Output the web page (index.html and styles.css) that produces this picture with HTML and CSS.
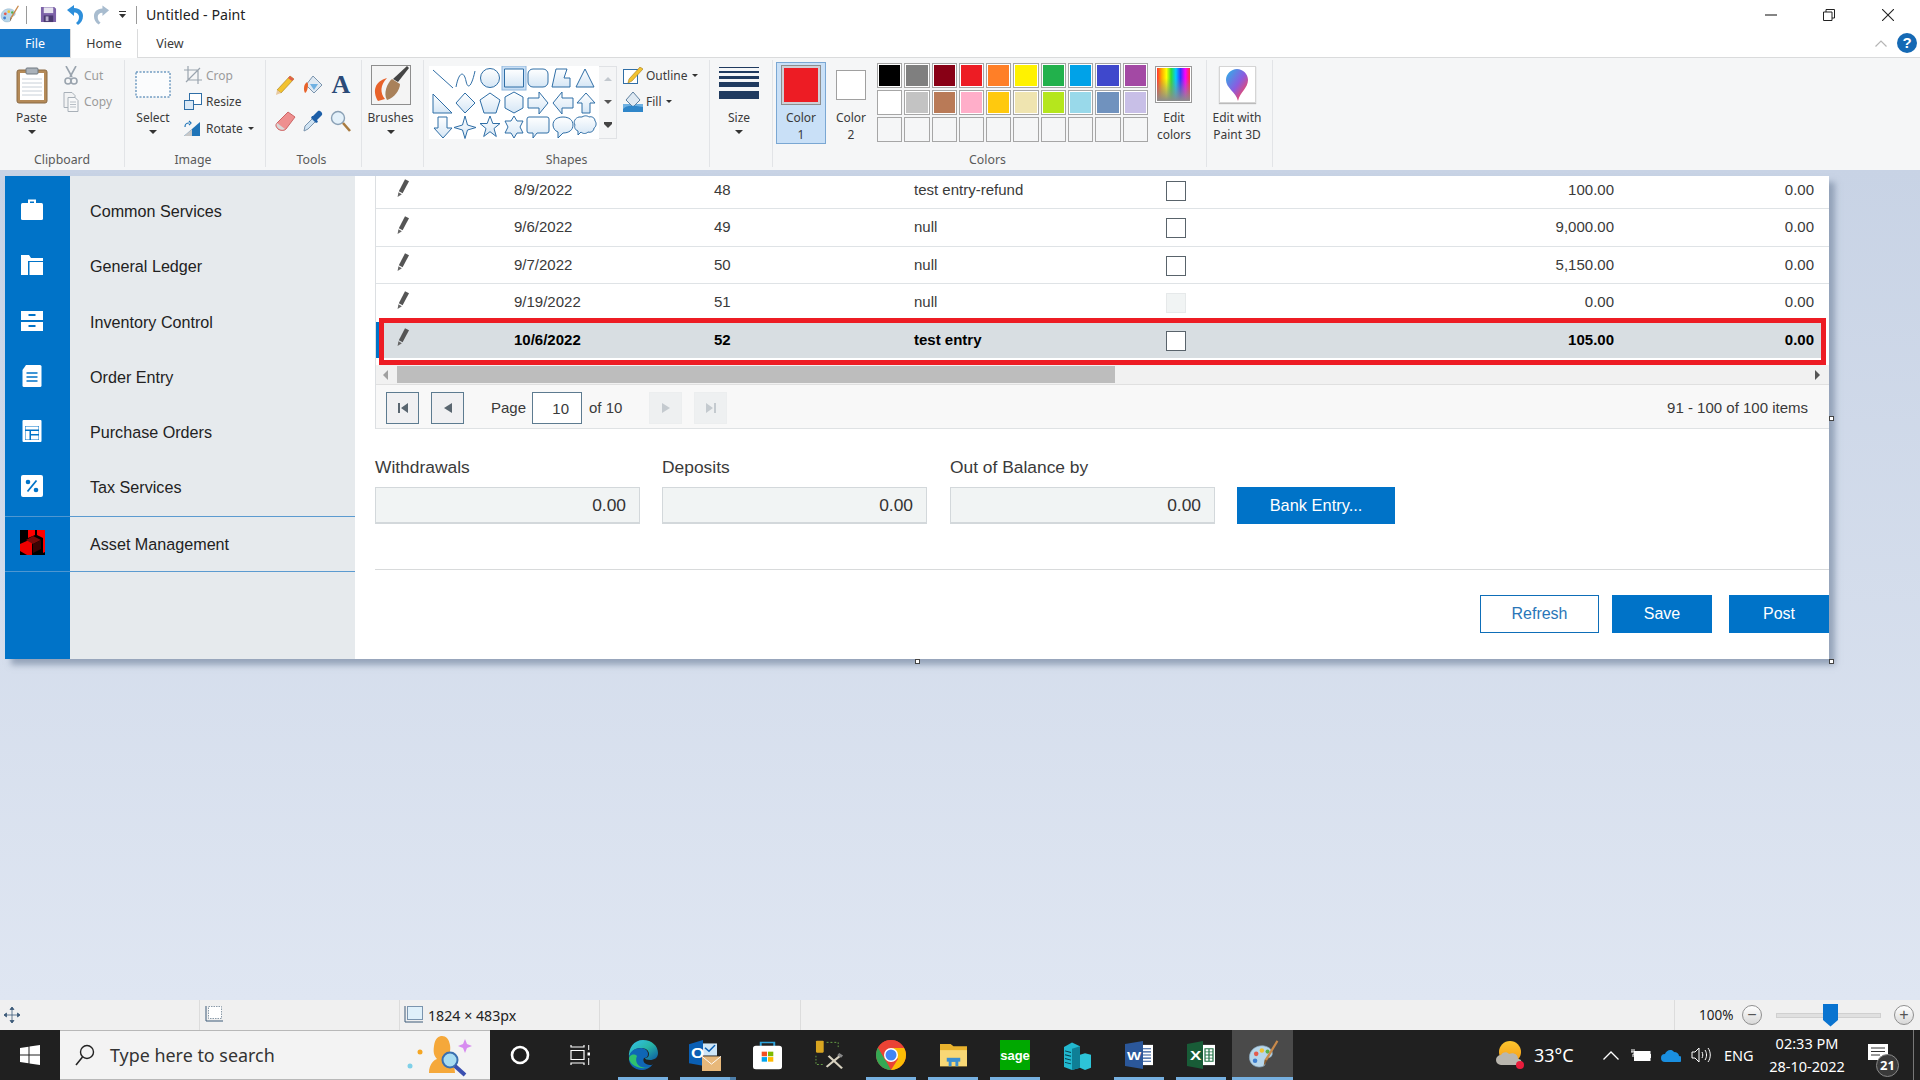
FILE: index.html
```html
<!DOCTYPE html>
<html lang="en">
<head>
<meta charset="utf-8">
<title>Untitled - Paint</title>
<link rel="stylesheet" href="styles.css">
</head>
<body>
<svg class="defs" aria-hidden="true">
  <defs>
    <linearGradient id="sh" x1="0" y1="0" x2="0" y2="1"><stop offset="0" stop-color="#fff"/><stop offset="1" stop-color="#d5e6f5"/></linearGradient>
    <linearGradient id="edge" x1="0" y1="0" x2="1" y2="1"><stop offset="0" stop-color="#35c1f1"/><stop offset=".5" stop-color="#27b5a5"/><stop offset="1" stop-color="#0c59a4"/></linearGradient>
    <linearGradient id="drop" x1="0" y1="0" x2="1" y2="1"><stop offset="0" stop-color="#27b6e8"/><stop offset=".5" stop-color="#8a5ce0"/><stop offset=".8" stop-color="#e8486e"/><stop offset="1" stop-color="#f6a623"/></linearGradient>
    <linearGradient id="sun" x1="0" y1="0" x2="0" y2="1"><stop offset="0" stop-color="#fdc62e"/><stop offset="1" stop-color="#f59a16"/></linearGradient>
    <symbol id="pal" viewBox="0 0 30 30">
      <path d="M3 17C3 10 10 6 16 7c5 1 8 4 7 8-1 3-5 2-6 4-1 3 1 5-2 6-5 2-12-1-12-8z" fill="#b7d6ea" stroke="#8aa9bf" stroke-width=".6"/>
      <circle cx="9" cy="14" r="2" fill="#e25b4d"/><circle cx="14" cy="11" r="2" fill="#f2c230"/><circle cx="19" cy="12" r="1.8" fill="#58b04a"/><circle cx="8" cy="20" r="2" fill="#3f7fd0"/>
      <path d="M27 2l1.500 1-10 17-2-1z" fill="#c98a4b"/><path d="M16.500 19l2 1-3 5z" fill="#8c5a2b"/>
    </symbol>
    <symbol id="pen" viewBox="0 0 12 18"><path d="M8 .3L12 2.300 5.600 14.300 1.800 12.200z" fill="#555"/><path d="M1.400 13.200L4.900 15.200 .6 18z" fill="#666"/></symbol>
  </defs>
</svg>

<header class="titlebar">
  <svg class="t-app" viewBox="0 0 30 30"><use href="#pal"/></svg>
  <i class="t-sep t-sep-a"></i>
  <svg class="t-save" viewBox="0 0 18 18"><path d="M1 1h14l2 2v14H1z" fill="#7c62a8"/><rect x="4" y="1.500" width="10" height="6" fill="#e6e3ee"/><rect x="4" y="10" width="10" height="7" fill="#4a3a70"/><rect x="6" y="11" width="3" height="5" fill="#b9b0cf"/></svg>
  <svg class="t-undo" viewBox="0 0 18 22"><path d="M1 6l7-5v3c6 0 9 4 9 8 0 4-2 7-5 9l-2-2c2-1.500 3-3.500 3-6 0-2.500-2-4.500-5-4.500V12z" fill="#2d8fdb"/></svg>
  <svg class="t-redo" viewBox="0 0 18 22"><path d="M17 6l-7-5v3C4 4 1 8 1 12c0 4 2 7 5 9l2-2c-2-1.500-3-3.500-3-6 0-2.500 2-4.500 5-4.500V12z" fill="#a8bccf"/></svg>
  <svg class="t-more" viewBox="0 0 8 8"><rect y="0" width="7" height="1" fill="#333"/><path d="M0 3h7L3.500 7z" fill="#333"/></svg>
  <i class="t-sep t-sep-b"></i>
  <span class="t-title">Untitled - Paint</span>
  <svg class="w-min" viewBox="0 0 12 12"><path d="M0 6h12" stroke="#222" stroke-width="1.100"/></svg>
  <svg class="w-max" viewBox="0 0 12 12"><path d="M.5 3h8.500v8.500H.5zM3 3V.5h8.500V9H9" fill="none" stroke="#222"/></svg>
  <svg class="w-close" viewBox="0 0 12 12"><path d="M0 0l12 12M12 0L0 12" stroke="#222" stroke-width="1.100"/></svg>
</header>

<nav class="tabs">
  <span class="tab tab-file">File</span>
  <span class="tab tab-home">Home</span>
  <span class="tab tab-view">View</span>
  <svg class="tab-chev" viewBox="0 0 12 7"><path d="M.5 6.500L6 1l5.500 5.500" fill="none" stroke="#b5b5b5" stroke-width="1.200"/></svg>
  <span class="tab-help">?</span>
</nav>

<section class="ribbon">
  <div class="grp g-clip">
    <div class="grp-body">
      <div class="big b-paste">
        <div class="big-icon"><svg width="32" height="37" viewBox="0 0 32 37"><rect x="1" y="3" width="30" height="33" rx="2" fill="#b48a58" stroke="#8a6a44"/><rect x="4" y="6" width="24" height="27" fill="#fff"/><path d="M6 12h20M6 16h20M6 20h20M6 24h20M6 28h20" stroke="#c8d0d8"/><rect x="10" y="1" width="12" height="6" rx="1" fill="#aab2ba" stroke="#6f7880"/></svg></div>
        <span class="big-label">Paste</span><span class="caret"></span>
      </div>
      <div class="smalls s-clip">
        <div class="small off"><svg width="14" height="19" viewBox="0 0 14 19"><path d="M2 0l6 11M12 0L6 11" stroke="#9aa4ae" stroke-width="1.600"/><circle cx="4" cy="15" r="3" fill="none" stroke="#9aa4ae" stroke-width="1.600"/><circle cx="10" cy="15" r="3" fill="none" stroke="#9aa4ae" stroke-width="1.600"/></svg><span>Cut</span></div>
        <div class="small off"><svg width="16" height="20" viewBox="0 0 16 20"><path d="M1 .5h8l3 3v12H1z" fill="#f2f3f4" stroke="#a8b0b8"/><path d="M5 5.500h7l3 3v11H5z" fill="#f7f8f9" stroke="#a8b0b8"/><path d="M7 10h6M7 12.500h6M7 15h6" stroke="#b8bfc6"/></svg><span>Copy</span></div>
      </div>
    </div>
    <div class="grp-label">Clipboard</div>
  </div>

  <div class="grp g-image">
    <div class="grp-body">
      <div class="big b-select">
        <div class="big-icon"><svg width="36" height="27" viewBox="0 0 36 27"><rect x="1" y="1" width="34" height="25" fill="#fbfcfd" stroke="#2f6ea6" stroke-dasharray="2 1.500"/></svg></div>
        <span class="big-label">Select</span><span class="caret"></span>
      </div>
      <div class="smalls s-image">
        <div class="small off"><svg width="18" height="18" viewBox="0 0 18 18"><path d="M4 0v14h14M0 4h14v14M2 16L16 2" fill="none" stroke="#9aa4ae" stroke-width="1.200"/></svg><span>Crop</span></div>
        <div class="small"><svg width="18" height="17" viewBox="0 0 18 17"><rect x="5.500" y=".5" width="12" height="11" fill="#fff" stroke="#2f6ea6"/><rect x=".5" y="7.500" width="9" height="9" fill="#dbe9f6" stroke="#2f6ea6"/></svg><span>Resize</span></div>
        <div class="small"><svg width="18" height="18" viewBox="0 0 18 18"><path d="M16 3v14H0z" fill="#1f74b8"/><path d="M8 10L0 17h8z" fill="#c8c8c8"/><path d="M1 8c0-3 1-4 4-4M5 2l2 2-2 2" fill="none" stroke="#1f74b8" stroke-width="1.200"/></svg><span>Rotate</span><span class="caret-in"></span></div>
      </div>
    </div>
    <div class="grp-label lbl-left">Image</div>
  </div>

  <div class="grp g-tools">
    <div class="grp-body tools-grid">
      <svg viewBox="0 0 22 22" class="tool"><path d="M16 2l4 3L7 19l-4-3z" fill="#f2c230" stroke="#a47c1c" stroke-width=".6"/><path d="M3 16l4 3-5 2z" fill="#e8c9a0"/><path d="M16 2l4 3-2 2-4-3z" fill="#e0604c"/></svg>
      <svg viewBox="0 0 22 22" class="tool"><path d="M11 2l9 9-8 8-8-8z" fill="#dfe9f2" stroke="#7a94ae"/><path d="M5 8C2 10 1 15 3 19c2-1 3-5 3-9z" fill="#e8622a"/><path d="M8 10h8l-4 6z" fill="#6fb1e2"/></svg>
      <span class="tool-a">A</span>
      <svg viewBox="0 0 22 22" class="tool"><path d="M14 2l7 5-9 12c-2 2-5 2-8 0-2-2-3-4-1-6z" fill="#ee8f8f" stroke="#c66"/><path d="M3 13l8 6c-2 1-5 1-7-1-1-1-2-3-1-5z" fill="#d8d8d8"/></svg>
      <svg viewBox="0 0 22 22" class="tool"><path d="M2 21l1-5 8-8 3 3-8 8z" fill="#cfe3f3" stroke="#7a94ae"/><path d="M11 6l5-5c2-1 5 2 4 4l-5 5 1 2-2 1-5-5 1-2z" fill="#1d5fa8"/></svg>
      <svg viewBox="0 0 22 22" class="tool"><circle cx="8" cy="8" r="6.500" fill="#e4f1fa" stroke="#8aa0b5" stroke-width="1.400"/><path d="M13 13l7 8" stroke="#a87a3f" stroke-width="2.600"/></svg>
    </div>
    <div class="grp-label lbl-left">Tools</div>
  </div>

  <div class="grp g-brush">
    <div class="grp-body">
      <div class="big b-brush">
        <div class="big-icon"><svg width="40" height="40" viewBox="0 0 40 40"><rect x=".5" y=".5" width="39" height="39" fill="#f4f4f4" stroke="#8e8e8e"/><path d="M7 36C1 26 4 16 16 13 9 20 9 28 14 34z" fill="#e8622a"/><path d="M38 3L27 17l-5-3L36 1z" fill="#444"/><path d="M21 14l8 5c0 6-6 14-13 16-4-6 0-17 5-21z" fill="#a9815a"/></svg></div>
        <span class="big-label">Brushes</span><span class="caret"></span>
      </div>
    </div>
    <div class="grp-label">&nbsp;</div>
  </div>

  <div class="grp g-shapes">
    <div class="grp-body shapes-body">
      <svg class="gallery" width="170" height="73" viewBox="0 0 170 73">
        <rect width="170" height="73" fill="#fff"/>
        <rect x="73" y="0" width="24" height="24" fill="#c9dff5" stroke="#8fb6dc"/>
        <g fill="url(#sh)" stroke="#2f6ea6" stroke-width="1" stroke-linejoin="round">
          <path d="M4 4L24 22" fill="none"/>
          <path d="M27 21c3-16 8-16 10-6s6 4 9-10" fill="none"/>
          <ellipse cx="61" cy="12" rx="9.500" ry="9.500"/>
          <rect x="75.500" y="3" width="19" height="18"/>
          <rect x="99" y="3" width="20" height="18" rx="5"/>
          <path d="M127 3h11l-3 9h6v9h-18z"/>
          <path d="M156 3l9 18h-18z"/>
          <path d="M4 28v19h19z"/>
          <path d="M36 27l10 10-10 10-9-10z"/>
          <path d="M61 27l10 7-4 13H55l-4-13z"/>
          <path d="M85 26l9 5v11l-9 5-9-5V31z"/>
          <path d="M99 32h11v-6l9 11-9 11v-6H99z"/>
          <path d="M144 32h-11v-6l-9 11 9 11v-6h11z"/>
          <path d="M157 27l9 10h-5v10h-8V37h-5z"/>
          <path d="M9 51h9v11h5l-9 10-9-10h4z"/>
          <path d="M36 50l2.500 9 8.500 2.500-8.500 2.500-2.500 8.500-2.500-8.500-8.500-2.500 8.500-2.500z"/>
          <path d="M61 50l2.800 7.500H71l-6 5 2.300 8-6.300-4.800-6.300 4.800 2.300-8-6-5h7.200z"/>
          <path d="M85 50l3 5h6l-3 6 3 6h-6l-3 5-3-5h-6l3-6-3-6h6z"/>
          <path d="M100 51h18a2 2 0 0 1 2 2v12a2 2 0 0 1-2 2h-10l-4 5v-5h-4a2 2 0 0 1-2-2V53a2 2 0 0 1 2-2z"/>
          <path d="M134 51c6 0 10 3 10 8s-4 8-10 8l-5 5v-6c-3-1-5-4-5-7 0-5 4-8 10-8z"/>
          <path d="M153 51c3-2 6-1 7 0 3-1 6 1 6 4 2 2 1 6-1 7 0 3-3 5-6 4-2 2-5 2-7 0l-3 3v-4c-3-1-4-4-3-6-2-3 0-7 4-8z"/>
        </g>
      </svg>
      <div class="gal-scroll"><span class="gs-up"></span><span class="gs-down"></span><span class="gs-more"></span></div>
      <div class="smalls s-shapes">
        <div class="small"><svg width="20" height="17" viewBox="0 0 20 17"><rect x=".5" y="2.500" width="14" height="14" fill="#fff" stroke="#2f6ea6"/><path d="M17 0l3 2-11 12-4 2 1-4z" fill="#f2c230" stroke="#a47c1c" stroke-width=".6"/></svg><span>Outline</span><span class="caret-in"></span></div>
        <div class="small"><svg width="20" height="21" viewBox="0 0 20 21"><path d="M0 13h20v8H0z" fill="#6fb1e2"/><path d="M10 1l7 8-7 7-7-7z" fill="#dfe9f2" stroke="#5d7f9f"/><path d="M0 18c4-4 8-4 20-2v5H0z" fill="#2f86c9"/></svg><span>Fill</span><span class="caret-in"></span></div>
      </div>
    </div>
    <div class="grp-label">Shapes</div>
  </div>

  <div class="grp g-size">
    <div class="grp-body">
      <div class="big b-size">
        <div class="big-icon"><svg width="40" height="33" viewBox="0 0 40 33"><g fill="#1f3a5f"><rect y="0" width="40" height="1"/><rect y="4" width="40" height="2"/><rect y="9" width="40" height="3"/><rect y="15" width="40" height="5"/><rect y="24" width="40" height="8"/></g></svg></div>
        <span class="big-label">Size</span><span class="caret"></span>
      </div>
    </div>
    <div class="grp-label">&nbsp;</div>
  </div>

  <div class="grp g-colors">
    <div class="grp-body colors-body">
      <div class="color-btn color-on">
        <span class="sw-big"></span>
        <span class="big-label">Color</span><span class="big-label">1</span>
      </div>
      <div class="color-btn">
        <span class="sw-two"></span>
        <span class="big-label">Color</span><span class="big-label">2</span>
      </div>
      <div class="palette">
        <i class="c c1"></i><i class="c c2"></i><i class="c c3"></i><i class="c c4"></i><i class="c c5"></i><i class="c c6"></i><i class="c c7"></i><i class="c c8"></i><i class="c c9"></i><i class="c c10"></i>
        <i class="c c11"></i><i class="c c12"></i><i class="c c13"></i><i class="c c14"></i><i class="c c15"></i><i class="c c16"></i><i class="c c17"></i><i class="c c18"></i><i class="c c19"></i><i class="c c20"></i>
        <i class="c e"></i><i class="c e"></i><i class="c e"></i><i class="c e"></i><i class="c e"></i><i class="c e"></i><i class="c e"></i><i class="c e"></i><i class="c e"></i><i class="c e"></i>
      </div>
      <div class="big b-edit">
        <div class="big-icon"><span class="rainbow"></span></div>
        <span class="big-label">Edit</span><span class="big-label">colors</span>
      </div>
    </div>
    <div class="grp-label lbl-left">Colors</div>
  </div>

  <div class="grp g-3d">
    <div class="grp-body">
      <div class="big b-3d">
        <div class="big-icon"><span class="p3d"><svg width="22" height="32" viewBox="0 0 22 32"><path d="M11 0c6 0 11 5 11 11 0 8-8 12-10 21C10 23 0 19 0 11 0 5 5 0 11 0z" fill="url(#drop)"/></svg></span></div>
        <span class="big-label">Edit with</span><span class="big-label">Paint 3D</span>
      </div>
    </div>
    <div class="grp-label">&nbsp;</div>
  </div>
</section>

<main class="canvas">
  <div class="doc">
    <aside class="rail">
      <div class="rail-item"><svg viewBox="0 0 24 24" class="ri"><path d="M8 5V1.500h8V5h-2V3.500h-4V5z" fill="#fff"/><rect x="1" y="5" width="22" height="17" rx="1.500" fill="#fff"/></svg></div>
      <div class="rail-item"><svg viewBox="0 0 24 24" class="ri"><path d="M1 2h8l2 3h12v3H8v14H1z" fill="#fff"/><path d="M9.500 9H23v13H9.500z" fill="#fff"/></svg></div>
      <div class="rail-item"><svg viewBox="0 0 24 24" class="ri"><path d="M1 2h22v9H1zM1 13h22v9H1z" fill="#fff"/><path d="M8.500 5h7v2h-7zM8.500 16h7v2h-7z" fill="#0073c8"/></svg></div>
      <div class="rail-item"><svg viewBox="0 0 24 24" class="ri"><path d="M6 1h14a1.500 1.500 0 0 1 1.500 1.500v19A1.500 1.500 0 0 1 20 23H4a1.500 1.500 0 0 1-1.500-1.500V6z" fill="#fff"/><path d="M6.500 9h11M6.500 13h11M6.500 17h11" stroke="#0073c8" stroke-width="1.500"/></svg></div>
      <div class="rail-item"><svg viewBox="0 0 24 24" class="ri"><rect x="2.500" y="1" width="19" height="22" rx="1" fill="#fff"/><path d="M5 7h14v14H5z" fill="#0073c8"/><path d="M5.500 7.500h13v3h-13zM11 12h7.500v3H11zM11 16.500h7.500v4H11z" fill="#fff"/><path d="M5.500 12h4v8.500h-4z" fill="#fff"/></svg></div>
      <div class="rail-item"><svg viewBox="0 0 24 24" class="ri"><rect x="1" y="1" width="22" height="22" rx="2" fill="#fff"/><path d="M16.500 6.500l-9 11" stroke="#0073c8" stroke-width="1.800"/><circle cx="8" cy="8" r="2.300" fill="#0073c8"/><circle cx="16" cy="16" r="2.300" fill="#0073c8"/></svg></div>
      <div class="rail-item rail-asset"><svg viewBox="0 0 25 25" class="ra"><rect width="25" height="25" fill="#000"/><path d="M8 0h7v5l-7 3zM17 0h8v22l-2 1V8l-6-3z" fill="#f00"/><path d="M0 14l9-4 3 2v13H7l-7-4z" fill="#e00"/><path d="M6 10l7-4 8 4-8 4z" fill="#7a0a0a"/><path d="M13 14l8-4v9l-8 4z" fill="#3a0303"/></svg></div>
    </aside>
    <nav class="menu">
      <div class="menu-item">Common Services</div>
      <div class="menu-item">General Ledger</div>
      <div class="menu-item">Inventory Control</div>
      <div class="menu-item">Order Entry</div>
      <div class="menu-item">Purchase Orders</div>
      <div class="menu-item">Tax Services</div>
      <div class="menu-item menu-asset">Asset Management</div>
    </nav>
    <section class="content">
      <div class="grid-box">
        <div class="row r-first"><span class="pc"><svg class="pencil"><use href="#pen"/></svg></span><span>8/9/2022</span><span>48</span><span>test entry-refund</span><span class="cb"></span><span class="num">100.00</span><span class="num">0.00</span></div>
        <div class="row r-second"><span class="pc"><svg class="pencil"><use href="#pen"/></svg></span><span>9/6/2022</span><span>49</span><span>null</span><span class="cb"></span><span class="num">9,000.00</span><span class="num">0.00</span></div>
        <div class="row r-third"><span class="pc"><svg class="pencil"><use href="#pen"/></svg></span><span>9/7/2022</span><span>50</span><span>null</span><span class="cb"></span><span class="num">5,150.00</span><span class="num">0.00</span></div>
        <div class="row r-fourth"><span class="pc"><svg class="pencil"><use href="#pen"/></svg></span><span>9/19/2022</span><span>51</span><span>null</span><span class="cb cb-off"></span><span class="num">0.00</span><span class="num">0.00</span></div>
        <div class="row r-sel"><span class="pc"><svg class="pencil"><use href="#pen"/></svg></span><span>10/6/2022</span><span>52</span><span>test entry</span><span class="cb"></span><span class="num">105.00</span><span class="num">0.00</span></div>
        <div class="hscroll"><span class="hs-l"></span><span class="hs-thumb"></span><span class="hs-r"></span></div>
        <div class="pager">
          <span class="pg"><svg width="12" height="12" viewBox="0 0 12 12"><path d="M1 1h2v10H1zM11 1v10L4 6z" fill="#5a6670"/></svg></span>
          <span class="pg"><svg width="12" height="12" viewBox="0 0 12 12"><path d="M10 1v10L2 6z" fill="#5a6670"/></svg></span>
          <span class="pg-word">Page</span>
          <span class="pg-input">10</span>
          <span class="pg-of">of 10</span>
          <span class="pg pg-off"><svg width="12" height="12" viewBox="0 0 12 12"><path d="M2 1v10l8-5z" fill="#c4cacf"/></svg></span>
          <span class="pg pg-off"><svg width="12" height="12" viewBox="0 0 12 12"><path d="M9 1h2v10H9zM1 1v10l7-5z" fill="#c4cacf"/></svg></span>
          <span class="pg-count">91 - 100 of 100 items</span>
        </div>
      </div>
      <div class="totals">
        <div class="field"><label>Withdrawals</label><div class="val">0.00</div></div>
        <div class="field"><label>Deposits</label><div class="val">0.00</div></div>
        <div class="field field-third"><label>Out of Balance by</label><div class="val">0.00</div></div>
        <div class="field"><span class="btn btn-primary btn-bank">Bank Entry...</span></div>
      </div>
      <div class="actions">
        <span class="btn btn-line">Refresh</span>
        <span class="btn btn-primary btn-save">Save</span>
        <span class="btn btn-primary btn-post">Post</span>
      </div>
    </section>
    <div class="red-box"></div>
    <i class="hd hd-r"></i><i class="hd hd-b"></i><i class="hd hd-c"></i>
  </div>
</main>

<footer class="status">
  <div class="st st-1"><svg width="18" height="18" viewBox="0 0 18 18"><path d="M9 1v16M1 9h16M9 1L7 3.500h4zM9 17l-2-2.500h4zM1 9l2.500-2v4zM17 9l-2.500-2v4z" fill="#3c5a78" stroke="#3c5a78" stroke-width=".8"/></svg></div>
  <div class="st st-2"><svg width="18" height="18" viewBox="0 0 18 18"><path d="M1 0v15h17" fill="none" stroke="#3c5a78"/><rect x="3.500" y=".5" width="13" height="12" fill="#fff" stroke="#8a9aa8" stroke-dasharray="1.500 1"/></svg></div>
  <div class="st st-3"><svg width="19" height="18" viewBox="0 0 19 18"><path d="M1 0v16h18" fill="none" stroke="#3c5a78"/><rect x="3.500" y=".5" width="15" height="13" fill="#dff0fa" stroke="#7a94ae"/></svg><span>1824 × 483px</span></div>
  <div class="st st-4"></div>
  <div class="st st-5"></div>
  <div class="st-zoom">
    <span class="z-pct">100%</span>
    <span class="z-btn">−</span>
    <span class="z-track"><span class="z-thumb"></span></span>
    <span class="z-btn">+</span>
  </div>
</footer>

<footer class="taskbar">
  <div class="start"><svg width="20" height="20" viewBox="0 0 20 20"><path d="M0 3l8.500-1.300V9.500H0zM9.500 1.500L20 0v9.500H9.500zM0 10.500h8.500v7.800L0 17zM9.500 10.500H20V20L9.500 18.500z" fill="#fff"/></svg></div>
  <div class="search">
    <svg class="s-glass" width="20" height="22" viewBox="0 0 20 22"><circle cx="12" cy="8" r="6.500" fill="none" stroke="#222" stroke-width="1.400"/><path d="M7.500 13L1 21" stroke="#222" stroke-width="1.600"/></svg>
    <span class="s-text">Type here to search</span>
    <svg class="s-art" width="70" height="44" viewBox="0 0 70 44"><circle cx="13" cy="19" r="2.500" fill="#f5a623"/><circle cx="3" cy="33" r="2.500" fill="#7fd0e8"/><path d="M58 6l2 5 5 2-5 2-2 5-2-5-5-2 5-2z" fill="#d78cf0"/><path d="M22 40c0-9 5-13 8-14-3-3-4-7-3-13 1-8 5-10 8-10 4 0 7 3 8 9 1 6-1 11-3 14 4 2 8 6 8 14z" fill="#f5a83a"/><circle cx="43" cy="27" r="7.500" fill="#a8dcf2" stroke="#3a6fb0" stroke-width="2"/><path d="M48 33l10 9" stroke="#3a4fb0" stroke-width="4"/></svg>
  </div>
  <div class="tb-plain"><svg width="20" height="20" viewBox="0 0 20 20"><circle cx="10" cy="10" r="8" fill="none" stroke="#fff" stroke-width="2.600"/></svg></div>
  <div class="tb-plain"><svg width="20" height="20" viewBox="0 0 20 20"><path d="M1 0v2h13V0M1 5.500h13v9H1zM1 20v-2h13v2" fill="none" stroke="#fff" stroke-width="1.200"/><rect x="17.500" y="7.500" width="2.500" height="3" fill="#fff"/><path d="M18.700 0v5M18.700 13v7" stroke="#fff"/></svg></div>

  <div class="app open"><svg width="30" height="30" viewBox="0 0 30 30"><path d="M15 0c9 0 15 6 15 13 0 5-4 7-8 7-3 0-5-1-5-2 2 0 4-1 4-4 0-4-4-6-8-6C7 8 2 12 1 18 0 8 6 0 15 0z" fill="url(#edge)"/><path d="M1 17c1-6 6-9 12-9 3 0 7 2 7 6 0 3-2 4-4 4-2 3 1 7 6 7 1 0 2 0 3-1-3 4-7 6-11 6C6 30 0 24 1 17z" fill="#0f66b5"/><path d="M9 16c-3 6 2 14 12 11-6 3-18 0-20-8 0-4 5-6 8-3z" fill="#2fc06e"/></svg></div>
  <div class="app open open-double"><svg width="32" height="31" viewBox="0 0 32 36" preserveAspectRatio="none"><path d="M0 5l14-5v30L0 27z" fill="#0a5fb4"/><rect x="14" y="4" width="14" height="14" fill="#cfe6f7"/><path d="M16 9l4 4 6-7" fill="none" stroke="#0a5fb4" stroke-width="1.600"/><text x="2" y="21" class="logo-o">O</text><path d="M13 19h19v17H13z" fill="#e8b87a"/><path d="M13 19l9.500 9 9.500-9" fill="none" stroke="#fff" stroke-width="1"/></svg></div>
  <div class="app"><svg width="29" height="30" viewBox="0 0 30 36" preserveAspectRatio="none"><path d="M8 8V3h14v5" fill="none" stroke="#2ea3dc" stroke-width="2"/><rect y="7" width="30" height="28" rx="3" fill="#fff"/><rect x="9" y="14" width="5.500" height="5.500" fill="#f25022"/><rect x="15.500" y="14" width="5.500" height="5.500" fill="#7fba00"/><rect x="9" y="20.500" width="5.500" height="5.500" fill="#00a4ef"/><rect x="15.500" y="20.500" width="5.500" height="5.500" fill="#ffb900"/></svg></div>
  <div class="app"><svg width="29" height="30" viewBox="0 0 30 38" preserveAspectRatio="none"><rect x="1" y="1" width="8" height="15" rx="1" fill="#d9a520"/><path d="M12 3h12v8M1 20v11h7" fill="none" stroke="#6fae4a" stroke-dasharray="2 2"/><path d="M12 34l14-14M14 20l14 16" stroke="#d8d2c0" stroke-width="2.400"/><path d="M24 18l4 3" stroke="#888" stroke-width="3.500"/></svg></div>
  <div class="app open"><svg width="30" height="30" viewBox="0 0 30 30"><circle cx="15" cy="15" r="15" fill="#ea4335"/><path d="M15 30C6.700 30 0 23.300 0 15c0-2.700.7-5.200 2-7.400L10 21l5 9z" fill="#34a853"/><path d="M15 8h13c1.300 2 2 4.400 2 7 0 8.300-6.700 15-15 15l7-11z" fill="#fbbc05"/><path d="M2 7.600L10 21l-.5-8L15 8h13C25.400 3.200 20.600 0 15 0 9.500 0 4.700 3 2 7.600z" fill="#ea4335"/><circle cx="15" cy="15" r="7" fill="#fff"/><circle cx="15" cy="15" r="5.500" fill="#4285f4"/></svg></div>
  <div class="app open"><svg width="27" height="23" viewBox="0 0 28 30" preserveAspectRatio="none"><path d="M0 0h11l3 3h14v26H0z" fill="#e9b22d"/><path d="M0 8h28v21H0z" fill="#f8d775"/><path d="M9 29V19h10v10h-3v-6h-4v6z" fill="#3b8ed0"/><rect x="7" y="18" width="14" height="5" fill="#3b8ed0"/></svg></div>
  <div class="app open"><span class="sage">sage</span></div>
  <div class="app"><svg width="28" height="29" viewBox="0 0 28 38" preserveAspectRatio="none"><path d="M1 8l8-6 8 5v28l-8 3-8-4z" fill="#22b8cf"/><path d="M9 10l8-3v28l-8 3z" fill="#0f7f96"/><path d="M17 18l5-2 6 2v17l-6 3-5-3z" fill="#2dc4d8"/><path d="M2 13l6 2M2 18l6 2M2 23l6 2M2 28l6 2" stroke="#063f4d" stroke-width="1.200"/></svg></div>
  <div class="app open"><svg width="28" height="28" viewBox="0 0 28 36" preserveAspectRatio="none"><rect x="12" y="5" width="16" height="26" fill="#fff"/><path d="M16 10h10M16 14h10M16 18h10M16 22h10M16 26h10" stroke="#2b579a" stroke-width="1.400"/><path d="M0 4l18-4v36L0 32z" fill="#2b579a"/><text x="2" y="24" class="logo-w">W</text></svg></div>
  <div class="app open"><svg width="28" height="28" viewBox="0 0 28 36" preserveAspectRatio="none"><rect x="12" y="5" width="16" height="26" fill="#fff"/><path d="M18 10h8v16h-8zM18 14h8M18 18h8M18 22h8M22 10v16" fill="none" stroke="#217346" stroke-width="1.200"/><path d="M0 4l16-4v36L0 32z" fill="#185c37"/><text x="3" y="24" class="logo-x">X</text></svg></div>
  <div class="app open active"><svg width="34" height="34" viewBox="0 0 30 30"><use href="#pal"/></svg></div>

  <div class="tray">
    <svg class="tr-w" width="28" height="28" viewBox="0 0 28 28"><circle cx="14" cy="11" r="11" fill="url(#sun)"/><path d="M5 24a5 5 0 0 1 0-10c1-3 6-4 8-1 4-2 9 0 9 5a3 3 0 0 1 1 6z" fill="#b9b6ae"/><circle cx="24" cy="24" r="4" fill="#e81c3c"/></svg>
    <span class="tr-t">33°C</span>
    <svg class="tr-c" width="16" height="9" viewBox="0 0 16 9"><path d="M.5 8.500L8 1l7.500 7.500" fill="none" stroke="#fff" stroke-width="1.300"/></svg>
    <svg class="tr-b" width="20" height="12" viewBox="0 0 20 12"><rect x="3.500" y="2.500" width="15.500" height="9" fill="#fff" stroke="#fff"/><rect x="19" y="5" width="1" height="4" fill="#fff"/><path d="M1 0v3M3 0v3M0 3h4v2H2v3" fill="none" stroke="#fff"/></svg>
    <svg class="tr-o" width="20" height="13" viewBox="0 0 20 13"><path d="M4 13a4 4 0 0 1 0-8c1-3 6-6 9-2 3 0 5 2 5 4a3 3 0 0 1 0 6z" fill="#1a8fe0"/></svg>
    <svg class="tr-v" width="20" height="16" viewBox="0 0 20 16"><path d="M1 5h3l4-4v14l-4-4H1z" fill="none" stroke="#fff"/><path d="M11 5c1 2 1 4 0 6M14 3c2 3 2 7 0 10M17 1c3 4 3 10 0 14" fill="none" stroke="#fff"/></svg>
    <span class="tr-l">ENG</span>
    <div class="tr-clock"><span>02:33 PM</span><span>28-10-2022</span></div>
    <div class="tr-n">
      <svg width="20" height="17" viewBox="0 0 20 17"><path d="M0 0h20v16H0z" fill="#fff"/><path d="M3 4h14M3 7.500h14M3 11h9" stroke="#333"/></svg>
      <span class="tr-badge">21</span>
    </div>
    <i class="tr-edge"></i>
  </div>
</footer>
</body>
</html>
```

FILE: styles.css
```css
*{box-sizing:border-box}
html,body{margin:0;padding:0}
body{width:1920px;height:1080px;overflow:hidden;display:flex;flex-direction:column;font-family:"Noto Sans","Open Sans",sans-serif;background:#fff;color:#3a3a3a}
.defs{position:absolute;width:0;height:0}
svg{display:block;flex:none}
i{display:block;font-style:normal}

/* Title bar */
.titlebar{height:29px;display:flex;align-items:center;background:#fff;flex:none}
.t-app{width:21px;height:21px;margin-left:-1px}
.t-sep{width:1px;height:18px;background:#9a9a9a}
.t-sep-a{margin-left:6px}
.t-save{width:17px;height:17px;margin-left:13px}
.t-undo{width:18px;height:22px;margin-left:9px}
.t-redo{width:17px;height:22px;margin-left:9px}
.t-more{width:8px;height:8px;margin-left:9px}
.t-sep-b{margin-left:9px}
.t-title{margin-left:9px;font-size:14.200px;color:#222}
.w-min{width:12px;height:12px;margin-left:auto}
.w-max{width:12px;height:12px;margin-left:46px}
.w-close{width:12px;height:12px;margin-left:47px;margin-right:26px}

/* Tabs */
.tabs{height:29px;flex:none;display:flex;align-items:stretch;border-bottom:1px solid #dadbdc;font-size:12.500px;background:#fff}
.tab{display:flex;align-items:center;justify-content:center}
.tab-file{width:70px;background:#1979ca;color:#fff}
.tab-home{width:68px;height:29px;background:#fff;border:1px solid #dadbdc;border-bottom:0;border-top:0}
.tab-view{width:64px}
.tab-chev{width:12px;height:7px;align-self:center;margin-left:auto}
.tab-help{width:20px;height:20px;align-self:center;margin:0 3px 0 10px;border-radius:50%;background:#1569b4;color:#fff;font:bold 15px/20px "Liberation Sans",sans-serif;text-align:center}

/* Ribbon */
.ribbon{height:112px;flex:none;display:flex;background:#f5f6f7;padding-top:2px}
.grp{height:107px;display:flex;flex-direction:column;border-right:1px solid #e2e4e7;flex:none}
.grp-body{height:90px;display:flex;flex:none}
.grp-label{height:18px;line-height:19px;font-size:12.300px;text-align:center;color:#5a5a5a}
.lbl-left{padding-right:4px}
.g-clip{width:125px}
.g-image{width:141px}
.g-tools{width:96px}
.g-brush{width:62px}
.g-shapes{width:286px}
.g-size{width:63px}
.g-colors{width:434px}
.g-3d{width:66px}
.big{display:flex;flex-direction:column;align-items:center;padding-top:5px;font-size:12px;color:#3a3a3a}
.big-icon{height:44px;display:flex;justify-content:center;align-items:flex-start;flex:none}
.big-label{height:17px;line-height:17px;white-space:nowrap}
.caret{width:0;height:0;margin-top:4px;border:4px solid transparent;border-top-color:#333;border-bottom:0}
.caret-in{width:0;height:0;margin-left:1px;border:3.500px solid transparent;border-top-color:#333;border-bottom:0;align-self:center}
.b-paste{width:53px;margin-left:5px}
.b-paste .big-icon{padding-top:2px}
.b-select{width:56px}
.b-select .big-icon{padding-top:6px}
.b-brush{width:57px}
.b-size{width:58px}
.b-size .big-icon{padding-top:2px}
.b-edit{width:52px}
.b-edit .big-icon{padding-top:1px}
.b-3d{width:60px}
.b-3d .big-icon{padding-top:1px}
.smalls{display:flex;flex-direction:column;padding-top:2px;font-size:12px}
.small{height:26.500px;display:flex;align-items:center;gap:4px;white-space:nowrap;color:#3a3a3a}
.small.off{color:#9b9b9b}
.s-clip{margin-left:4px}
.s-clip .small svg{margin-left:1px;width:16px}
.s-clip .small{gap:5px}
.s-image{margin-left:3px}
.s-shapes{margin-left:6px}
.s-shapes .small{gap:3px}
.tools-grid{display:grid;grid-template-columns:repeat(3,28px);grid-auto-rows:36px;padding:7px 0 0 5px;justify-items:center;align-items:center;align-content:start}
.tool{width:22px;height:22px}
.tool-a{font:bold 26px/22px "Liberation Serif",serif;color:#2b4a78}
.shapes-body{padding-left:5px}
.gallery{margin-top:6px}
.gal-scroll{width:18px;height:73px;margin-top:6px;display:flex;flex-direction:column;align-items:center;justify-content:space-around;border:1px solid #e0e2e5;border-left:0;background:#f4f5f6}
.gs-up{border:4px solid transparent;border-bottom-color:#c2c8ce;border-top:0}
.gs-down{border:4px solid transparent;border-top-color:#555;border-bottom:0}
.gs-more{width:0;height:0;border:4px solid transparent;border-top-color:#444;border-bottom:0;box-shadow:0 -2px 0 0 #444}
.colors-body{padding-left:3px}
.color-btn{width:50px;height:82px;margin-top:2px;display:flex;flex-direction:column;align-items:center;font-size:12px;padding-top:1px;border:1px solid transparent}
.color-on{background:#c9e0f7;border-color:#7aa7d3}
.sw-big{width:40px;height:40px;margin-top:1px;margin-bottom:4px;background:#ed1c24;border:1px solid #8e8e8e;box-shadow:inset 0 0 0 2px #cfcfd6}
.sw-two{width:30px;height:30px;margin-top:6px;margin-bottom:9px;background:#fff;border:1px solid #a0a0a0}
.palette{display:grid;grid-template-columns:repeat(10,25.300px);grid-auto-rows:25px;gap:2px;padding-top:3px;margin-left:1px;height:88px;align-content:start}
.c{border:1px solid #a6a6a6;box-shadow:inset 0 0 0 1px #fff}
.e{box-shadow:none}
.c1{background:#000}.c2{background:#7f7f7f}.c3{background:#880015}.c4{background:#ed1c24}.c5{background:#ff7f27}.c6{background:#fff200}.c7{background:#22b14c}.c8{background:#00a2e8}.c9{background:#3f48cc}.c10{background:#a349a4}
.c11{background:#fff}.c12{background:#c3c3c3}.c13{background:#b97a57}.c14{background:#ffaec9}.c15{background:#ffc90e}.c16{background:#efe4b0}.c17{background:#b5e61d}.c18{background:#99d9ea}.c19{background:#7092be}.c20{background:#c8bfe7}
.rainbow{display:block;width:37px;height:37px;border:2px solid #fff;outline:1px solid #9a9a9a;outline-offset:-1px;background:linear-gradient(rgba(128,128,128,0) 30%,#8c8c8c 100%),linear-gradient(90deg,#f33,#fa0,#ff0,#3d3,#0cf,#33f,#f0f,#f33)}
.p3d{width:37px;height:37px;display:flex;align-items:center;justify-content:center;background:#fff;border:1px solid #d5d5d5;box-shadow:0 1px 1px #bbb}

/* Canvas */
.canvas{height:830px;flex:none;background:linear-gradient(#c8d3e5,#dfe6f2);padding:6px 0 0 5px}
.doc{position:relative;width:1824px;height:483px;display:flex;background:#fff;box-shadow:6px 6px 6px rgba(130,145,170,.75);font-family:"Liberation Sans",Arial,sans-serif}
.rail{width:65px;height:100%;background:#0073c8;display:flex;flex-direction:column;padding-top:7px;flex:none}
.rail-item{height:55.300px;display:flex;justify-content:center;padding:15px 11px 0 0;flex:none}
.ri{width:24px;height:24px}
.rail-asset{padding-top:13px;height:56px;border-top:1px solid #4f97d1;border-bottom:1px solid #4f97d1;margin-top:1px}
.ra{width:25px;height:25px}
.menu{width:285px;height:100%;background:#e6eaed;flex:none;padding-top:7px;font-size:16.150px;color:#222}
.menu-item{height:55.300px;line-height:57px;padding-left:20px}
.menu-asset{height:56px;line-height:54px;margin-top:1px;border-top:1px solid #5b9bd0;border-bottom:1px solid #5b9bd0}
.content{flex:1;min-width:0;padding-left:20px;display:flex;flex-direction:column}
.grid-box{border-left:1px solid #dcdfe2;font-size:15px;color:#3a3a3a;height:253px}
.row{display:grid;grid-template-columns:138px 200px 200px 251px 22px 427px 200px;align-items:center;border-bottom:1px solid #dfe3e6;height:38px;padding-bottom:3px}
.r-first{height:33px;padding-bottom:5px}
.r-third{height:37px;padding-bottom:2px}
.r-fourth{height:38px;padding-bottom:3px;border-bottom:0}
.r-sel{height:38px;font-weight:bold;color:#000;background:#d8dee2;box-shadow:inset 4px 0 0 #0073c8;border-bottom:2px solid #fff;padding-bottom:1px;margin-right:3px;margin-bottom:5px}
.pc{padding-left:21px;display:block}
.pencil{width:12px;height:18px;margin-bottom:6px}
.r-first .pencil{margin-bottom:4px}
.r-second .pencil{margin-bottom:3px}
.r-third .pencil{margin-bottom:5px}
.r-fourth .pencil{margin-bottom:4px}
.cb{display:block;width:20px;height:20px;margin-left:1px;margin-top:3px;background:#fff;border:1px solid #59636b}
.cb-off{background:#f1f4f4;border-color:#e6e9ea}
.num{text-align:right}
.hscroll{height:20px;background:#f1f1f1;display:flex;align-items:center;border-bottom:1px solid #e0e0e0}
.hs-l{width:0;height:0;margin-left:7px;border:5px solid transparent;border-right-color:#a0a0a0;border-left:0}
.hs-thumb{width:718px;height:17px;margin-left:9px;background:#bdbdbd}
.hs-r{width:0;height:0;margin-left:auto;margin-right:9px;border:5px solid transparent;border-left-color:#555;border-right:0}
.pager{height:44px;display:flex;align-items:center;background:#f8f8f8;border-bottom:1px solid #dfe2e4;padding:2px 0 0 10px}
.pg{width:33px;height:32px;display:flex;align-items:center;justify-content:center;border:1px solid #5d7b90;background:#f0f0f2;margin-right:12px}
.pg-off{border-color:#eceeef;background:#eef0f1}
.pg-word{margin-left:15px;width:41px}
.pg-input{width:50px;height:32px;line-height:32px;border:1px solid #5d7b90;background:#fff;text-align:right;padding-right:12px;font-size:15px}
.pg-of{width:60px;margin-left:7px}
.pg-count{margin-left:auto;padding-right:21px}
.totals{display:grid;grid-template-columns:265px 265px 266px 158px;column-gap:22px;padding-top:28px;height:141px;border-bottom:1px solid #d8dadb;flex:none}
.field label{display:block;height:30px;line-height:20px;font-size:17.400px;color:#3a3a3a}
.val{height:37px;line-height:34px;padding-right:13px;text-align:right;font-size:17.400px;color:#333;background:#f1f4f4;border:2px solid #d3d8db;border-width:1px 1px 2px}
.field-third{margin-left:1px}
.btn{display:flex;align-items:center;justify-content:center;font-size:16px;height:38px}
.btn-primary{background:#0073c8;color:#fff}
.btn-bank{margin-top:30px;height:37px;font-size:16.400px}
.actions{display:flex;justify-content:flex-end;padding-top:25px}
.btn-line{width:119px;border:1px solid #0e6eb8;color:#2a76b8}
.btn-save{width:100px;margin-left:13px}
.btn-post{width:100px;margin-left:17px}
.red-box{position:absolute;left:374px;top:142px;width:1447px;height:47px;border:5px solid #ed1c24;pointer-events:none}
.hd{position:absolute;width:5px;height:5px;background:#fff;border:1px solid #444}
.hd-r{left:1824px;top:240px}
.hd-b{left:910px;top:483px}
.hd-c{left:1824px;top:483px}

/* Status */
.status{height:30px;flex:none;display:flex;background:#f0f0f0;font-size:14.200px;color:#222}
.st{height:100%;display:flex;align-items:center;border-right:1px solid #dcdcdc;flex:none}
.st-1{width:200px;padding-left:3px}
.st-2{width:200px;padding-left:5px}
.st-3{width:200px;padding-left:4px;gap:5px}
.st-4{width:201px}
.st-5{width:874px}
.st-zoom{flex:1;display:flex;align-items:center;padding-left:24px;font-size:13.500px}
.z-pct{width:43px;flex:none}
.z-btn{width:20px;height:20px;flex:none;border-radius:50%;border:1px solid #8f8f8f;background:linear-gradient(#fff,#d8d8d8);font:16px/17px "Liberation Sans",sans-serif;text-align:center;color:#555}
.z-track{width:105px;height:5px;flex:none;margin:0 13px 0 14px;background:#e0e0e0;border:1px solid #d0d0d0;display:flex;align-items:center;padding-left:46px}
.z-thumb{width:15px;height:23px;flex:none;background:#0a74d0;clip-path:polygon(0 0,100% 0,100% 72%,50% 100%,0 72%)}

/* Taskbar */
.taskbar{height:50px;flex:none;display:flex;align-items:center;background:#202020;color:#fff}
.start{width:60px;height:100%;display:flex;align-items:center;justify-content:center}
.search{width:430px;height:100%;display:flex;align-items:center;background:#f3f3f3;border:1px solid #b8b8b8;border-width:1px 0;padding-left:15px;color:#333;font-size:17.900px}
.s-text{margin-left:15px}
.s-art{margin-left:auto;margin-right:13px}
.tb-plain{width:60px;height:100%;display:flex;align-items:center;justify-content:center}
.tb-plain + .tb-plain{margin-right:2px}
.app{width:62px;height:100%;position:relative;display:flex;align-items:center;justify-content:center}
.open::after{content:"";position:absolute;left:6px;right:6px;bottom:0;height:3px;background:#76b0e0}
.open-double::before{content:"";position:absolute;right:0;bottom:0;width:6px;height:3px;background:#4d7ea8}
.active{background:#4a4a4a;width:61px}
.active::after{left:0;right:0}
.sage{display:flex;width:30px;height:30px;align-items:center;justify-content:center;background:#00a800;color:#fff;font:bold 13px "Liberation Sans",sans-serif}
.logo-o{font:bold 17px "Liberation Sans",sans-serif;fill:#fff}
.logo-w{font:bold 15px "Liberation Sans",sans-serif;fill:#fff}
.logo-x{font:bold 17px "Liberation Sans",sans-serif;fill:#fff}
.tray{display:flex;align-items:center;height:100%;flex:1;padding-left:203px;font-size:15px}
.tr-t{margin-left:10px;width:40px;font-size:18px;white-space:nowrap}
.tr-c{margin-left:29px}
.tr-b{margin-left:12px}
.tr-o{margin-left:10px}
.tr-v{margin-left:10px}
.tr-l{margin-left:13px;width:30px;font-size:14.500px}
.tr-clock{margin-left:3px;width:100px;display:flex;flex-direction:column;align-items:center;font-size:14.500px;line-height:23px}
.tr-n{margin-left:11px;width:30px;height:36px;position:relative;padding-top:7px}
.tr-badge{position:absolute;left:8px;top:17px;width:23px;height:23px;border-radius:50%;background:#3a3a3a;border:1px solid #888;font:bold 13px/21px "Noto Sans",sans-serif;text-align:center}
.tr-edge{width:1px;height:100%;background:#777;margin-left:15px}
```
